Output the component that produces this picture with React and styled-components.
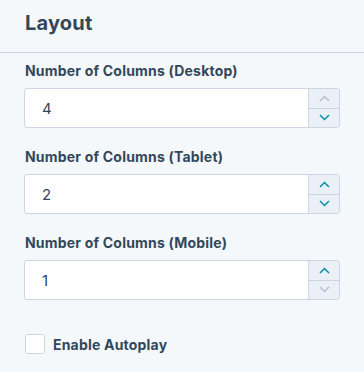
import styled, { createGlobalStyle } from "styled-components";

const GlobalStyle = createGlobalStyle`
  html, body {
    margin: 0;
    padding: 0;
    background: #f5f8fa;
  }
  body {
    font-family: "Inter", "Lato", "Liberation Sans", sans-serif;
    color: #33475b;
  }
`;

const Panel = styled.section`
  width: 364px;
  height: 372px;
  background: #f5f8fa;
  overflow: hidden;
`;

const Header = styled.header`
  height: 53px;
  box-sizing: border-box;
  padding: 0 25px;
  display: flex;
  align-items: center;
  border-bottom: 1px solid #cbd6e2;

  h2 {
    margin: 0 0 6px 0;
    font-size: 20px;
    font-weight: 700;
    letter-spacing: 0.2px;
    color: #33475b;
  }
`;

const Body = styled.div`
  padding: 9px 24px 0 24px;
  display: flex;
  flex-direction: column;
  gap: 20px;
`;

const Field = styled.div`
  display: flex;
  flex-direction: column;
  gap: 8px;
`;

const Label = styled.label`
  font-size: 14px;
  line-height: 18px;
  font-weight: 700;
  letter-spacing: 0.2px;
  padding-left: 1px;
  color: #33475b;
`;

const NumberBox = styled.div`
  display: flex;
  height: 40px;
  box-sizing: border-box;
  border: 1px solid #cbd6e2;
  border-radius: 3px;
  background: #fff;
  width: 316px;
  overflow: hidden;
`;

const Value = styled.div`
  flex: 1;
  display: flex;
  align-items: center;
  padding-left: 17px;
  font-size: 15px;
  color: #33475b;
`;

const Spinner = styled.div`
  width: 30px;
  display: flex;
  flex-direction: column;
  border-left: 1px solid #cbd6e2;
  background: #eaf0f6;
`;

const Step = styled.button`
  flex: 1;
  border: 0;
  padding: 0;
  margin: 0;
  background: transparent;
  display: flex;
  align-items: center;
  justify-content: center;
  color: ${({ $disabled }) => ($disabled ? "#b0c1d4" : "#0091ae")};
  & + & {
    border-top: 1px solid #cbd6e2;
  }
`;

const CheckRow = styled.div`
  margin-top: 14px;
  display: flex;
  align-items: center;
  gap: 8px;
  padding-left: 1px;
`;

const Box = styled.span`
  width: 20px;
  height: 20px;
  box-sizing: border-box;
  border: 1px solid #cbd6e2;
  border-radius: 3px;
  background: #fff;
`;

const CheckText = styled.span`
  font-size: 14px;
  font-weight: 700;
  letter-spacing: 0.2px;
  color: #33475b;
`;

const Chevron = ({ up }) => (
  <svg width="11" height="7" viewBox="0 0 11 7" fill="none">
    <path
      d={up ? "M1 6 L5.5 1.5 L10 6" : "M1 1 L5.5 5.5 L10 1"}
      stroke="currentColor"
      strokeWidth="1.5"
    />
  </svg>
);

const fields = [
  { label: "Number of Columns (Desktop)", value: 4, upOff: true, downOff: false },
  { label: "Number of Columns (Tablet)", value: 2, upOff: false, downOff: false },
  { label: "Number of Columns (Mobile)", value: 1, upOff: false, downOff: true },
];

const App = () => {
  return (
    <Panel>
      <GlobalStyle />
      <Header>
        <h2>Layout</h2>
      </Header>
      <Body>
        {fields.map((f) => (
          <Field key={f.label}>
            <Label>{f.label}</Label>
            <NumberBox>
              <Value>{f.value}</Value>
              <Spinner>
                <Step $disabled={f.upOff}>
                  <Chevron up />
                </Step>
                <Step $disabled={f.downOff}>
                  <Chevron />
                </Step>
              </Spinner>
            </NumberBox>
          </Field>
        ))}
        <CheckRow>
          <Box />
          <CheckText>Enable Autoplay</CheckText>
        </CheckRow>
      </Body>
    </Panel>
  );
};

export default App;
